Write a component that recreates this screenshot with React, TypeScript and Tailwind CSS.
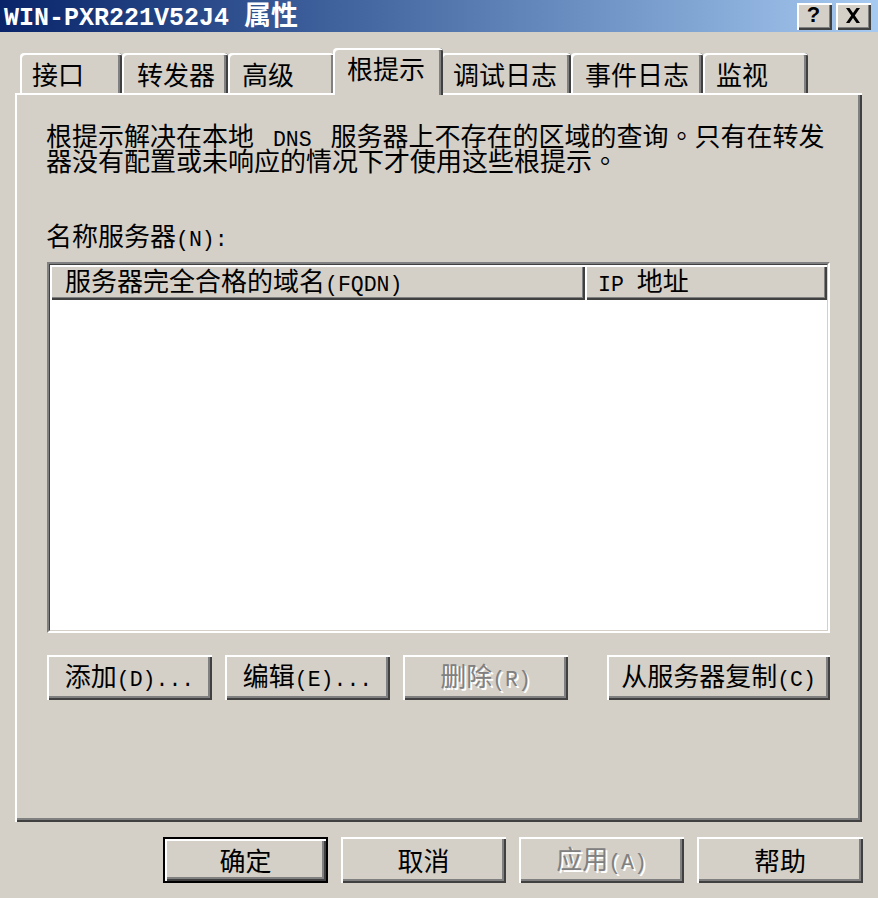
import React from 'react'

// Windows classic 3D bevels, drawn at the 2x scale of the screenshot
const raised = 'shadow-[inset_2px_2px_0_#fff,inset_-2px_-2px_0_#404040,inset_-4px_-4px_0_#808080]'
const raisedThin = 'shadow-[inset_2px_2px_0_#fff,inset_-2px_-2px_0_#404040,inset_-3px_-3px_0_#808080]'

// SimSun's half-width latin glyphs: a mono face at half the CJK advance
function L({ children, className = '' }: { children: React.ReactNode; className?: string }) {
  return <span className={`font-['Liberation_Mono',monospace] text-[21.5px] ${className}`}>{children}</span>
}

// centred full stop, as in the bitmap font
function Stop() {
  return <span className="font-['Noto_Sans_CJK_TC',sans-serif]">。</span>
}

function Tab({ label, className }: { label: string; className: string }) {
  return (
    <div
      className={`h-[40px] pt-[8px] text-[26px] leading-[26px] whitespace-nowrap rounded-t-[4px] shadow-[inset_2px_2px_0_#fff,inset_-2px_0_0_#404040,inset_-4px_0_0_#808080] ${className}`}
    >
      {label}
    </div>
  )
}

interface BtnProps {
  children: React.ReactNode
  width?: string
  disabled?: boolean
  isDefault?: boolean
}

function Btn({ children, width = 'w-[165px]', disabled = false, isDefault = false }: BtnProps) {
  return (
    <div
      className={`${width} h-full flex items-center justify-center bg-[#d4d0c8] ${raised} ${
        disabled ? 'text-[#808080] [text-shadow:2px_2px_0_#fff]' : 'text-black'
      } ${isDefault ? 'border-2 border-black' : ''}`}
    >
      <span className="whitespace-nowrap text-[26px] leading-[26px]">{children}</span>
    </div>
  )
}

export default function App() {
  return (
    <div className="w-[878px] h-[898px] overflow-hidden bg-[#d4d0c8] text-black font-['Noto_Sans_CJK_SC',sans-serif]">
      {/* Title bar */}
      <div className="h-[32px] flex items-center justify-between pl-[4px] pr-[7px] bg-linear-to-r from-[#0a246a] to-[#a6caf0]">
        <div className="whitespace-nowrap font-bold text-white leading-[28px]">
          <span className="font-['Liberation_Mono',monospace] text-[25px]">WIN-PXR221V52J4 </span>
          <span className="text-[27px]">属性</span>
        </div>
        <div className="flex gap-[4px]">
          <div className={`w-[35px] h-[27px] flex items-center justify-center bg-[#d4d0c8] ${raisedThin}`}>
            <span className="font-['Liberation_Sans',sans-serif] font-bold text-[22px] leading-none pr-[2px] pb-[2px]">?</span>
          </div>
          <div className={`w-[35px] h-[27px] flex items-center justify-center bg-[#d4d0c8] ${raisedThin}`}>
            <svg width="16" height="15" viewBox="0 0 16 15" className="mb-[2px] mr-[2px]">
              <path d="M1 0 L4.5 0 L8 5 L11.5 0 L15 0 L9.8 7.5 L15 15 L11.5 15 L8 10 L4.5 15 L1 15 L6.2 7.5 Z" fill="#000" />
            </svg>
          </div>
        </div>
      </div>

      {/* Tabs */}
      <div className="mt-[16px] h-[45px] flex items-end pl-[20px]">
        <Tab label="接口" className="w-[102px] pl-[12px]" />
        <Tab label="转发器" className="w-[106px] pl-[15px]" />
        <Tab label="高级" className="w-[107px] pl-[14px]" />
        <div className="relative z-10 -mx-[2px] -mb-[2px] w-[110px] h-[47px] pt-[7px] pl-[14px] text-[26px] leading-[26px] whitespace-nowrap rounded-t-[4px] bg-[#d4d0c8] shadow-[inset_2px_2px_0_#fff,inset_-2px_0_0_#404040,inset_-4px_0_0_#808080]">
          根提示
        </div>
        <Tab label="调试日志" className="w-[130px] pl-[12px]" />
        <Tab label="事件日志" className="w-[132px] pl-[14px]" />
        <Tab label="监视" className="w-[105px] pl-[13px]" />
      </div>

      {/* Tab page */}
      <div className={`ml-[15px] w-[847px] h-[729px] flex flex-col pt-[29px] pl-[32px] pr-[32px] ${raised}`}>
        <div className="text-[26px] leading-[25px] whitespace-nowrap -ml-[1px]">
          <div className="h-[25px]">
            根提示解决在本地<L className="px-[6px]"> DNS </L>服务器上不存在的区域的查询<Stop />只有在转发
          </div>
          <div className="h-[25px]">
            器没有配置或未响应的情况下才使用这些根提示<Stop />
          </div>
        </div>

        <div className="mt-[50px] h-[25px] text-[26px] leading-[25px] whitespace-nowrap -ml-[1px]">
          名称服务器<L>(N):</L>
        </div>

        {/* List view */}
        <div className="mt-[15px] h-[371px] border-2 border-t-[#808080] border-l-[#808080] border-r-white border-b-white">
          <div className="h-full flex flex-col border border-t-[#404040] border-l-[#404040] border-r-[#d4d0c8] border-b-[#d4d0c8] bg-white">
            <div className="h-[35px] flex">
              <div className={`w-[535px] h-full flex items-center pl-[15px] bg-[#d4d0c8] ${raisedThin}`}>
                <span className="whitespace-nowrap text-[26px] leading-[26px]">
                  服务器完全合格的域名<L>(FQDN)</L>
                </span>
              </div>
              <div className={`flex-1 h-full flex items-center pl-[13px] bg-[#d4d0c8] ${raisedThin}`}>
                <span className="whitespace-nowrap text-[26px] leading-[26px]">
                  <L>IP </L>地址
                </span>
              </div>
            </div>
            <div className="flex-1 bg-white" />
          </div>
        </div>

        {/* List buttons */}
        <div className="mt-[22px] h-[45px] flex justify-between">
          <div className="flex gap-[13px] h-full">
            <Btn>
              添加<L>(D)...</L>
            </Btn>
            <Btn>
              编辑<L>(E)...</L>
            </Btn>
            <Btn disabled>
              删除<L>(R)</L>
            </Btn>
          </div>
          <Btn width="w-[223px]">
            从服务器复制<L>(C)</L>
          </Btn>
        </div>
      </div>

      {/* Dialog buttons */}
      <div className="mt-[15px] h-[46px] flex justify-end gap-[13px] pr-[15px]">
        <Btn isDefault>确定</Btn>
        <Btn>取消</Btn>
        <Btn disabled>
          应用<L>(A)</L>
        </Btn>
        <Btn width="w-[166px]">帮助</Btn>
      </div>
    </div>
  )
}
